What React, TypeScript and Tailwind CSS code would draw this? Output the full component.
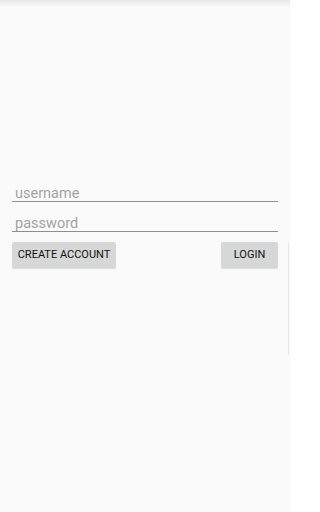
import React from 'react';

const font = { fontFamily: 'Roboto, "Noto Sans", sans-serif' };

function Field({ hint }: { hint: string }) {
  return (
    <div className="border-b border-[#8e8e8e] h-[20px] flex items-end pl-[3px]">
      <span className="text-[14.5px] leading-[20px] text-[#a3a3a3] translate-y-[3px]">{hint}</span>
    </div>
  );
}

export default function App() {
  return (
    <div className="relative w-[290px] h-[512px] bg-[#fafafa] overflow-hidden" style={font}>
      <div className="absolute inset-x-0 top-0 h-[7px] bg-gradient-to-b from-[#e9e9e9] to-[#fafafa]" />
      <div className="absolute right-[1px] top-[243px] h-[112px] w-px bg-[#e6e6e6]" />
      <div className="flex flex-col pt-[182px] px-[12px]">
        <Field hint="username" />
        <div className="h-[10px]" />
        <Field hint="password" />
        <div className="flex justify-between mt-[10px]">
          <button className="h-[26px] w-[104px] whitespace-nowrap bg-[#d6d7d7] rounded-[2px] text-[11px] font-normal text-[#111] pt-px shadow-[0_1px_1px_rgba(0,0,0,0.12)]">
            CREATE ACCOUNT
          </button>
          <button className="h-[26px] w-[57px] whitespace-nowrap bg-[#d6d7d7] rounded-[2px] text-[11px] font-normal text-[#111] pt-px shadow-[0_1px_1px_rgba(0,0,0,0.12)]">
            LOGIN
          </button>
        </div>
      </div>
    </div>
  );
}
